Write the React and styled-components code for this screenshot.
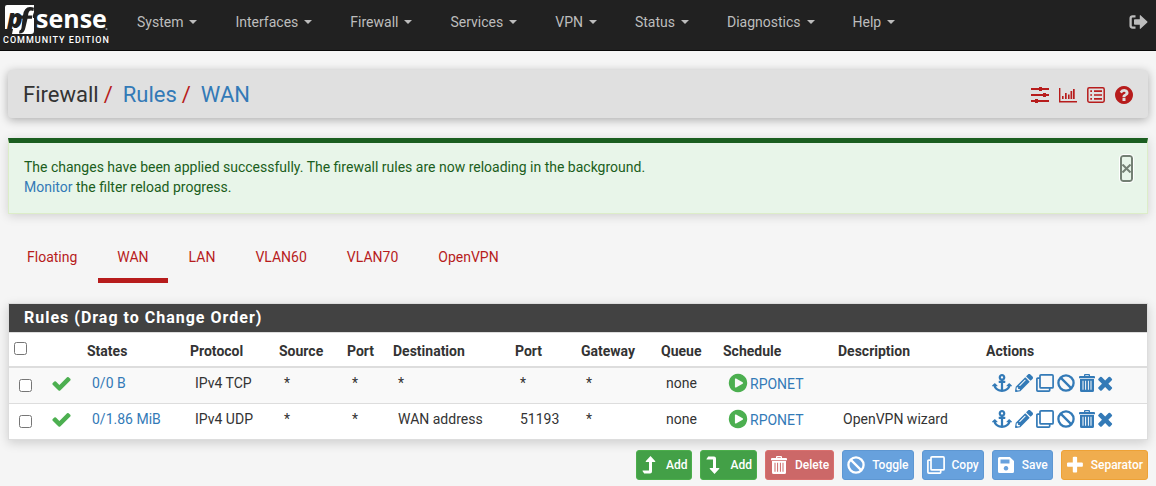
import React from "react";
import styled, { createGlobalStyle, css } from "styled-components";
import { FaAnchor, FaPencilAlt } from "react-icons/fa";

const Global = createGlobalStyle`
  *, *::before, *::after { box-sizing: border-box; }
  body {
    margin: 0;
    background: #f5f5f5;
    color: #333;
    font-family: Roboto, "Liberation Sans", sans-serif;
    font-size: 14px;
    line-height: 20px;
  }
  a { color: #337ab7; text-decoration: none; }
`;

/* ---------- icons ---------- */

const Glyph = styled.svg`
  display: block;
  flex: none;
  width: ${(p) => p.$size || 18}px;
  height: ${(p) => p.$size || 18}px;
  fill: currentColor;
`;

const glyphs = {
  check:
    "M1671 566q0 40-28 68l-724 724-136 136q-28 28-68 28t-68-28l-136-136-362-362q-28-28-28-68t28-68l136-136q28-28 68-28t68 28l294 295 656-657q28-28 68-28t68 28l136 136q28 28 28 68z",
  times:
    "M1490 1322q0 40-28 68l-136 136q-28 28-68 28t-68-28l-294-294-294 294q-28 28-68 28t-68-28l-136-136q-28-28-28-68t28-68l294-294-294-294q-28-28-28-68t28-68l136-136q28-28 68-28t68 28l294 294 294-294q28-28 68-28t68 28l136 136q28 28 28 68t-28 68l-294 294 294 294q28 28 28 68z",
  play:
    "M896 128q209 0 385.5 103t279.5 279.5 103 385.5-103 385.5-279.5 279.5-385.5 103-385.5-103-279.5-279.5-103-385.5 103-385.5 279.5-279.5 385.5-103zm384 823q32-18 32-55t-32-55l-544-320q-31-19-64-1-32 19-32 56v640q0 37 32 56 16 8 32 8 17 0 32-9z",
  question:
    "M1024 1376v-192q0-14-9-23t-23-9h-192q-14 0-23 9t-9 23v192q0 14 9 23t23 9h192q14 0 23-9t9-23zm256-672q0-88-55.5-163t-138.5-116-170-41q-243 0-371 213-15 24 8 42l132 100q7 6 19 6 16 0 25-12 53-68 86-92 34-24 86-24 48 0 85.5 26t37.5 59q0 38-20 61t-68 45q-63 28-115.5 86.5t-52.5 125.5v36q0 14 9 23t23 9h192q14 0 23-9t9-23q0-19 21.5-49.5t54.5-49.5q32-18 49-28.5t46-35 44.5-48 28-60.5 12.5-81zm384 192q0 209-103 385.5t-279.5 279.5-385.5 103-385.5-103-279.5-279.5-103-385.5 103-385.5 279.5-279.5 385.5-103 385.5 103 279.5 279.5 103 385.5z",
  plus:
    "M1600 736v192q0 40-28 68t-68 28h-416v416q0 40-28 68t-68 28h-192q-40 0-68-28t-28-68v-416h-416q-40 0-68-28t-28-68v-192q0-40 28-68t68-28h416v-416q0-40 28-68t68-28h192q40 0 68 28t28 68v416h416q40 0 68 28t28 68z",
};

const Solid = ({ name, size = 21, box = "0 0 1792 1792" }) => (
  <Glyph $size={size} viewBox={box} aria-hidden="true">
    <path d={glyphs[name]} />
  </Glyph>
);

const SlidersIcon = () => (
  <Glyph viewBox="0 0 18 18" aria-hidden="true">
    <path d="M0 2h18v2H0zM0 8h18v2H0zM0 14h18v2H0zM8 1h3v4H8zM12 7h3v4h-3zM4 13h3v4H4z" />
  </Glyph>
);
const ChartIcon = () => (
  <Glyph viewBox="0 0 18 18" aria-hidden="true">
    <path d="M0 2h1.400v13H18v1.400H0zM3 10h1.600v3H3zM6 7h1.700v6H6zM9 8.500h1.600V13H9zM11.500 5h1.700v8h-1.700zM14 3h1.700v10H14z" />
  </Glyph>
);
const ListIcon = () => (
  <Glyph viewBox="0 0 18 18" aria-hidden="true">
    <rect x="0.8" y="1.800" width="16.400" height="14.400" rx="1.400" fill="none" stroke="currentColor" strokeWidth="1.500" />
    <path d="M3.300 4.300H5v1.600H3.300zM7 4.300h8v1.600H7zM3.300 8.200H5v1.600H3.300zM7 8.200h8v1.600H7zM3.300 12.100H5v1.600H3.300zM7 12.100h8v1.600H7z" />
  </Glyph>
);
const LogoutIcon = () => (
  <Glyph $size={20} viewBox="0 0 20 20" aria-hidden="true">
    <path d="M7.500 4.400H4.600Q2.600 4.400 2.600 6.400v7.200q0 2 2 2h2.900" fill="none" stroke="currentColor" strokeWidth="2.300" />
    <path d="M6.800 7.300h5V3.500q0-.8.7-.3l6.800 6.300q.4.500 0 1l-6.800 6.300q-.7.500-.7-.3v-3.800h-5q-.8 0-.8-.8V8.100q0-.8.8-.8z" />
  </Glyph>
);
const CloneIcon = () => (
  <Glyph viewBox="0 0 18 18" aria-hidden="true">
    <g fill="none" stroke="currentColor" strokeWidth="1.700">
      <rect x="4" y="0.9" width="13.100" height="13" rx="1" />
      <path d="M4 4.200H1.800q-.9 0-.9.900v11.100q0 .9.900.9h11q.9 0 .9-.9V14" />
    </g>
  </Glyph>
);
const BanIcon = () => (
  <Glyph viewBox="0 0 18 18" aria-hidden="true">
    <g fill="none" stroke="currentColor" strokeWidth="2.300">
      <circle cx="9" cy="9" r="7.600" />
      <path d="M3.600 3.600l10.800 10.800" />
    </g>
  </Glyph>
);
const TrashIcon = () => (
  <Glyph viewBox="0 0 18 18" aria-hidden="true">
    <path d="M1 3q0-1 1-1h4V1q0-1 1-1h4q1 0 1 1v1h4q1 0 1 1v1.200H1zM7.300 1.200V2h3.400v-.8z" fillRule="evenodd" />
    <path
      d="M2 5h14v11.500q0 1.500-1.500 1.500h-11Q2 18 2 16.500zM4.500 6.800v9h1v-9zM7.100 6.800v9h1v-9zM9.900 6.800v9h1v-9zM12.500 6.800v9h1v-9z"
      fillRule="evenodd"
    />
  </Glyph>
);
const LevelIcon = ({ down }) => (
  <Glyph viewBox="0 0 18 18" aria-hidden="true">
    <path
      d="M9.500 0l4.800 5.300q.3.700-.5.700H11v9.500q0 2-2 2H3.200L1.500 15q-.2-.5.400-.5H8V6H5.200q-.8 0-.5-.7z"
      transform={down ? "matrix(1 0 0 -1 0 18)" : undefined}
    />
  </Glyph>
);
const SaveIcon = () => (
  <Glyph viewBox="0 0 18 18" aria-hidden="true">
    <path
      d="M2.500 1h10.300L17 5v10.500q0 1.500-1.500 1.500h-13Q1 17 1 15.500v-13Q1 1 2.500 1zM3.500 3.500v4h9v-4zM9 10a2.300 2.300 0 1 0 .01 0z"
      fillRule="evenodd"
    />
  </Glyph>
);

/* ---------- navigation bar ---------- */

const Navbar = styled.header`
  display: flex;
  align-items: center;
  height: 51px;
  padding-right: 8px;
  background: #212121;
  border-bottom: 1px solid #080808;
  color: #bdbdbd;
`;
const Brand = styled.a`
  display: block;
  width: 118px;
  height: 50px;
`;
const Menus = styled.nav`
  display: flex;
  flex: 1;
`;
const MenuButton = styled.button`
  display: flex;
  align-items: center;
  gap: 6px;
  padding: 0 19px 7px;
  border: 0;
  background: none;
  color: inherit;
  font: inherit;
  &::after {
    content: "";
    border: 4px solid transparent;
    border-top-color: currentColor;
    border-bottom: 0;
  }
`;
const LogoutLink = styled.a`
  color: inherit;
  padding-bottom: 6px;
`;

const Logo = () => (
  <svg width="118" height="50" viewBox="0 0 118 50" role="img" aria-label="pfSense Community Edition">
    <path d="M7 5h27v7l-1 3v3h1v13q0 3-3 3H12l1-5H5V7q0-2 2-2z" fill="#fff" />
    <g fontFamily="Open Sans, sans-serif" fontWeight="800" fontSize="25">
      <text x="7" y="28" fill="#212121" fontStyle="italic" fontSize="26">p</text>
      <text x="36" y="28" fill="#fff" fontWeight="700">sense</text>
    </g>
    <path
      d="M19.500 15.500H23q1-8.500 7-8.500 2.500 0 4 .8l-.6 3.200q-1.300-.5-2.400-.5-2.500 0-3 5h4.500l-.6 3.200h-4.400L25.300 28q-.8 5.500-6.300 5.500l.5-3q1.700-.3 2-2.500l1-9.300h-3.500z"
      fill="#212121"
    />
    <circle cx="106.500" cy="29" r="1" fill="#999" />
    <text x="3" y="43" fill="#fff" fontFamily="Roboto, sans-serif" fontWeight="500" fontSize="9" letterSpacing="1">
      COMMUNITY EDITION
    </text>
  </svg>
);

/* ---------- page header ---------- */

const Page = styled.main`
  padding: 19px 8px 6px;
`;
const PageHeader = styled.div`
  display: flex;
  align-items: center;
  justify-content: space-between;
  height: 48px;
  padding: 2px 15px 0;
  border-radius: 4px;
  background: #e0e0e0;
  box-shadow: 0 2px 10px rgba(0, 0, 0, 0.3);
`;
const Breadcrumb = styled.ol`
  display: flex;
  margin: 0;
  padding: 0;
  list-style: none;
  font-size: 22px;
  line-height: 24px;
`;
const Crumb = styled.li`
  & + &::before {
    content: "/";
    padding: 0 10px 0 5px;
    color: #b71c1c;
  }
`;
const Shortcuts = styled.div`
  display: flex;
  align-items: center;
  gap: 10px;
  a { color: #b71c1c; }
`;

/* ---------- alert ---------- */

const Alert = styled.div`
  display: flex;
  align-items: flex-start;
  justify-content: space-between;
  margin-top: 20px;
  padding: 14px 14px 16px 15px;
  border: 1px solid #dcedc8;
  border-top: 5px solid #1b5e20;
  background: #e8f5e9;
  color: #1b5e20;
  box-shadow: 0 2px 10px rgba(0, 0, 0, 0.15);
  p { margin: 0; }
`;
const CloseButton = styled.button`
  display: grid;
  place-items: center;
  width: 13px;
  height: 27px;
  margin-top: -2px;
  padding: 0;
  border: 2px solid #748074;
  border-radius: 3px;
  outline: 1px solid #fff;
  background: none;
  color: #748074;
`;

/* ---------- tabs ---------- */

const Tabs = styled.nav`
  display: flex;
  gap: 2px;
  margin-top: 24px;
`;
const Tab = styled.a`
  padding: 9px 19px 11px;
  border-bottom: 5px solid transparent;
  color: #b71c1c;
  ${(p) => p.$active && css`border-color: #b71c1c;`}
`;

/* ---------- rules panel ---------- */

const Panel = styled.section`
  margin-top: 20px;
  border: 1px solid #ddd;
  background: #fff;
  box-shadow: 0 3px 10px rgba(0, 0, 0, 0.16);
`;
const PanelTitle = styled.h2`
  margin: 0;
  padding: 4px 15px;
  background: #424242;
  color: #fff;
  font-size: 16px;
  font-weight: 700;
  line-height: 20px;
  letter-spacing: 1px;
`;
const RulesTable = styled.table`
  width: 100%;
  table-layout: fixed;
  border-collapse: separate;
  border-spacing: 0;
`;
const HeadCell = styled.th`
  height: 36px;
  padding: 2px 5px 0;
  border-top: 1px solid #ddd;
  border-bottom: 2px solid #ddd;
  text-align: left;
  font-weight: 700;
  white-space: nowrap;
`;
const Row = styled.tr`
  &:nth-child(odd) { background: #f9f9f9; }
  & + & td { height: 36px; border-top: 1px solid #ddd; }
`;
const Cell = styled.td`
  height: 35px;
  padding: 0 0 5px ${(p) => (p.$icon ? 4 : 10)}px;
  white-space: nowrap;
`;
const Tick = styled.input`
  display: block;
  width: 13px;
  height: 13px;
  margin: ${(p) => (p.$head ? "0 0 4px" : "4px 0 0")};
`;
const Pass = styled.span`
  color: #4caf50;
`;
const Schedule = styled.span`
  display: flex;
  align-items: center;
  gap: 2px;
  color: #4caf50;
  a { padding-top: 2px; }
`;
const Actions = styled.div`
  display: flex;
  align-items: center;
  gap: 3px;
  padding-left: 1px;
  a { display: block; }
  a:last-child { margin-left: -2px; }
`;

/* ---------- action buttons ---------- */

const Toolbar = styled.div`
  display: flex;
  justify-content: flex-end;
  gap: 8px;
  margin-top: 10px;
`;
const tones = {
  green: ["#43a047", "#4cae4c"],
  red: ["#cc6868", "#d9706e"],
  blue: ["#67a1dd", "#5e97d2"],
  orange: ["#f0ad4e", "#eea236"],
};
const ActionButton = styled.button`
  display: flex;
  align-items: center;
  gap: 7px;
  height: 30px;
  padding: 0 4px;
  border: 1px solid ${(p) => tones[p.$tone][1]};
  border-radius: 3px;
  background: ${(p) => tones[p.$tone][0]};
  color: #fff;
  font: 500 12px/18px Roboto, "Liberation Sans", sans-serif;
`;

const menus = ["System", "Interfaces", "Firewall", "Services", "VPN", "Status", "Diagnostics", "Help"];
const tabs = ["Floating", "WAN", "LAN", "VLAN60", "VLAN70", "OpenVPN"];
const columns = [
  ["", 35], ["States", 103], ["Protocol", 89], ["Source", 68], ["Port", 46], ["Destination", 122],
  ["Port", 66], ["Gateway", 80], ["Queue", 62], ["Schedule", 115], ["Description", 148], ["Actions", 166],
];
const rules = [
  { states: "0/0 B", protocol: "IPv4 TCP", destination: "*", port: "*", description: "" },
  { states: "0/1.86 MiB", protocol: "IPv4 UDP", destination: "WAN address", port: "51193", description: "OpenVPN wizard" },
];
const buttons = [
  ["Add", "green", <LevelIcon />],
  ["Add", "green", <LevelIcon down />],
  ["Delete", "red", <TrashIcon />],
  ["Toggle", "blue", <BanIcon />],
  ["Copy", "blue", <CloneIcon />],
  ["Save", "blue", <SaveIcon />],
  ["Separator", "orange", <Solid name="plus" size={18} box="100 60 1600 1600" />],
];
const rowActions = [
  ["Anchor", <FaAnchor size={20} display="block" />],
  ["Edit", <FaPencilAlt size={18} display="block" />],
  ["Copy", <CloneIcon />],
  ["Disable", <BanIcon />],
  ["Delete", <TrashIcon />],
  ["Kill states", <Solid name="times" size={18} box="200 128 1536 1536" />],
];

export default function App() {
  return (
    <>
      <Global />
      <Navbar>
        <Brand href="#"><Logo /></Brand>
        <Menus>
          {menus.map((m) => <MenuButton key={m}>{m}</MenuButton>)}
        </Menus>
        <LogoutLink href="#" aria-label="Logout"><LogoutIcon /></LogoutLink>
      </Navbar>
      <Page>
        <PageHeader>
          <Breadcrumb>
            <Crumb>Firewall</Crumb>
            <Crumb><a href="#">Rules</a></Crumb>
            <Crumb><a href="#">WAN</a></Crumb>
          </Breadcrumb>
          <Shortcuts>
            <a href="#" aria-label="Settings"><SlidersIcon /></a>
            <a href="#" aria-label="Status"><ChartIcon /></a>
            <a href="#" aria-label="Logs"><ListIcon /></a>
            <a href="#" aria-label="Help"><Solid name="question" size={18} box="128 128 1536 1536" /></a>
          </Shortcuts>
        </PageHeader>
        <Alert role="status">
          <p>
            The changes have been applied successfully. The firewall rules are now reloading in the background.
            <br />
            <a href="#">Monitor</a> the filter reload progress.
          </p>
          <CloseButton aria-label="Close">
            <svg width="9" height="9" viewBox="0 0 9 9" aria-hidden="true">
              <path d="M0.500 0.500l8 8M8.500 0.500l-8 8" stroke="currentColor" strokeWidth="2" />
            </svg>
          </CloseButton>
        </Alert>
        <Tabs>
          {tabs.map((t) => <Tab key={t} href="#" $active={t === "WAN"}>{t}</Tab>)}
        </Tabs>
        <Panel>
          <PanelTitle>Rules (Drag to Change Order)</PanelTitle>
          <RulesTable>
            <colgroup>
              <col width="38" />
              {columns.map(([, width], i) => <col key={i} width={width} />)}
            </colgroup>
            <thead>
              <tr>
                <HeadCell><Tick $head type="checkbox" aria-label="Select all rules" /></HeadCell>
                {columns.map(([name], i) => <HeadCell key={i}>{name}</HeadCell>)}
              </tr>
            </thead>
            <tbody>
              {rules.map((r) => (
                <Row key={r.protocol}>
                  <Cell><Tick type="checkbox" aria-label={"Select " + r.protocol} /></Cell>
                  <Cell $icon><Pass><Solid name="check" /></Pass></Cell>
                  <Cell><a href="#">{r.states}</a></Cell>
                  <Cell>{r.protocol}</Cell>
                  <Cell>*</Cell>
                  <Cell>*</Cell>
                  <Cell>{r.destination}</Cell>
                  <Cell>{r.port}</Cell>
                  <Cell>*</Cell>
                  <Cell>none</Cell>
                  <Cell>
                    <Schedule>
                      <Solid name="play" size={20} box="64 64 1664 1664" />
                      <a href="#">RPONET</a>
                    </Schedule>
                  </Cell>
                  <Cell>{r.description}</Cell>
                  <Cell>
                    <Actions>
                      {rowActions.map(([label, icon]) => <a key={label} href="#" aria-label={label}>{icon}</a>)}
                    </Actions>
                  </Cell>
                </Row>
              ))}
            </tbody>
          </RulesTable>
        </Panel>
        <Toolbar>
          {buttons.map(([label, tone, icon], i) => (
            <ActionButton key={i} $tone={tone}>{icon}{label}</ActionButton>
          ))}
        </Toolbar>
      </Page>
    </>
  );
}
